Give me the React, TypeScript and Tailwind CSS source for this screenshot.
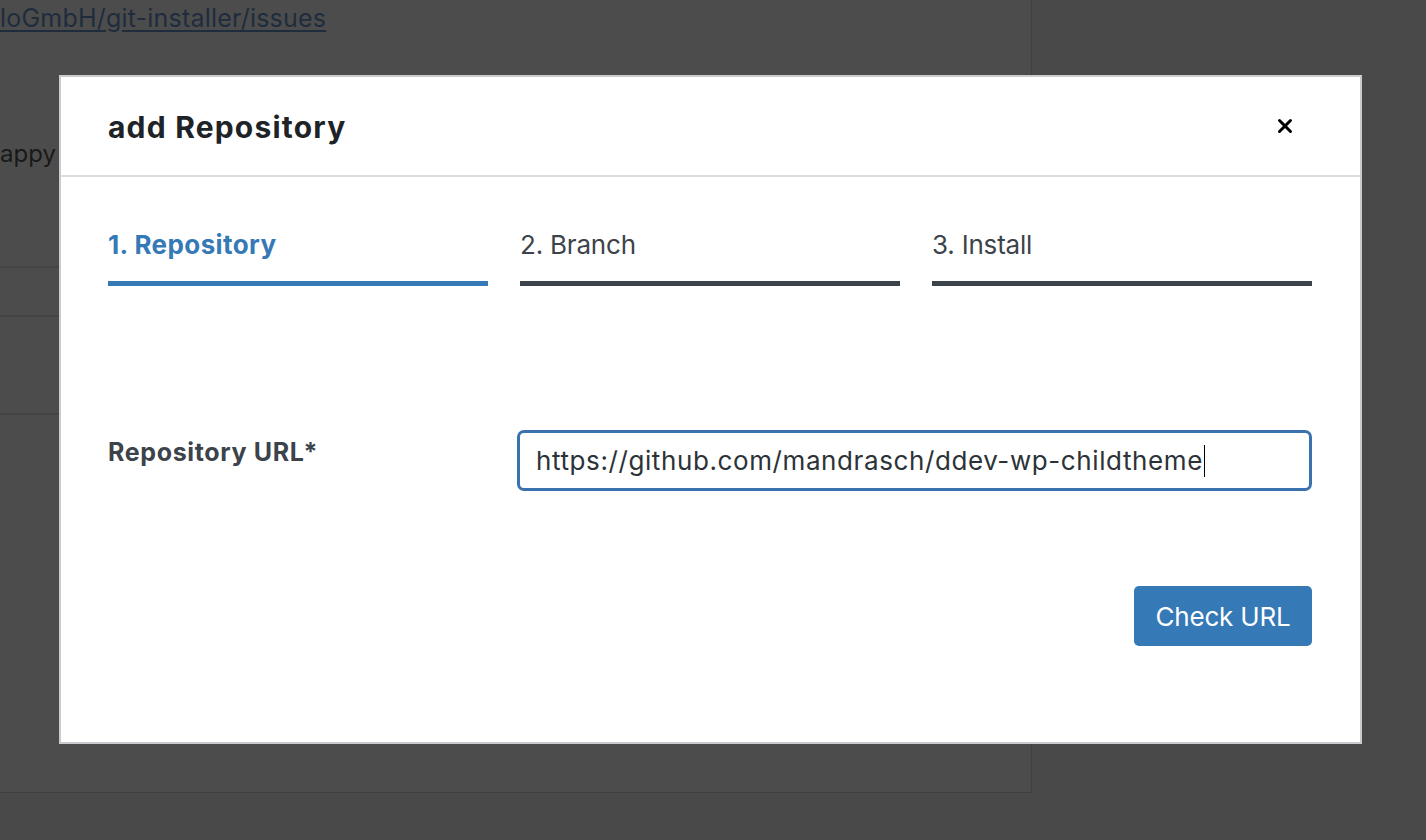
import { X } from "lucide-react";

const steps = [
  { label: "1. Repository", active: true },
  { label: "2. Branch", active: false },
  { label: "3. Install", active: false },
];

function BackgroundPage() {
  return (
    <div className="w-[1032px] h-[793px] bg-[#4c4c4c] border-r border-b border-[#3f3f3f] flex flex-col">
      <a className="mt-[3px] text-[25px] leading-[30px] text-[#1f2c3d] underline underline-offset-[3px] tracking-[0.2px]">
        loGmbH/git-installer/issues
      </a>
      <div className="mt-[106px] text-[24px] leading-[30px] text-[#191919]">appy</div>
      <div className="mt-[97px] border-t-2 border-[#444444] h-[49px]" />
      <div className="border-t-2 border-[#444444] h-[98px]" />
      <div className="border-t-2 border-[#444444]" />
    </div>
  );
}

function Modal() {
  return (
    <div className="absolute left-[59px] top-[75px] w-[1303px] h-[669px] bg-white border-2 border-[#c9cbce] flex flex-col">
      {/* Header */}
      <div className="h-[100px] shrink-0 flex items-center justify-between pl-[47px] pr-[64px] border-b-2 border-[#dcdcde]">
        <h1 className="mt-[3px] text-[30px] font-bold text-[#1d2327] tracking-[1.2px]">add Repository</h1>
        <X className="w-[22px] h-[22px] text-black" strokeWidth={3.2} />
      </div>

      {/* Body */}
      <div className="pl-[47px] pr-[48px] pt-[51px] flex flex-col">
        <div className="grid grid-cols-3 gap-[32px]">
          {steps.map((s) => (
            <div key={s.label} className="flex flex-col">
              <span
                className={
                  s.active
                    ? "text-[26px] leading-[34px] font-bold text-[#3579b6] tracking-[0.4px]"
                    : "text-[26px] leading-[34px] text-[#3c434a] tracking-[-0.2px]"
                }
              >
                {s.label}
              </span>
              <div
                className={
                  s.active
                    ? "mt-[19px] h-[5px] bg-[#3579b6]"
                    : "mt-[19px] h-[5px] bg-[#3c434a]"
                }
              />
            </div>
          ))}
        </div>

        <div className="mt-[144px] flex">
          <label className="w-[409px] shrink-0 pt-[6px] text-[25px] leading-[32px] font-bold text-[#3c434a] tracking-[0.65px]">
            Repository URL*
          </label>
          <div className="flex-1 h-[61px] border-[3px] border-[#3a72ae] rounded-[7px] flex items-center pl-[16px]">
            <span className="text-[26px] text-[#2c3338] tracking-[0.6px]">
              https://github.com/mandrasch/ddev-wp-childtheme
            </span>
            <span className="ml-[1px] w-[1.5px] h-[32px] bg-black" />
          </div>
        </div>

        <div className="mt-[95px] flex justify-end">
          <button className="w-[178px] h-[60px] rounded-[5px] bg-[#3579b6] text-white text-[26px] tracking-[-0.2px]">
            Check URL
          </button>
        </div>
      </div>
    </div>
  );
}

export default function App() {
  return (
    <div
      className="relative w-full h-[840px] overflow-hidden bg-[#494949]"
      style={{ fontFamily: "Inter, 'Noto Sans', sans-serif" }}
    >
      <BackgroundPage />
      <Modal />
    </div>
  );
}
